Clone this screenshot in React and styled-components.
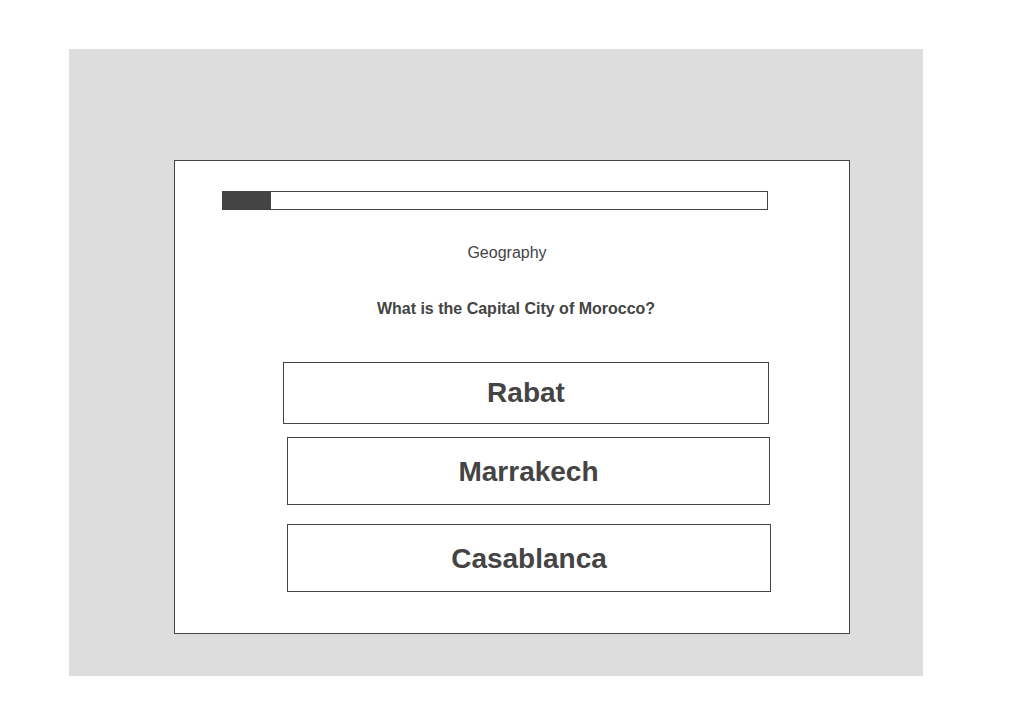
import React from "react";
import styled, { createGlobalStyle } from "styled-components";

const Global = createGlobalStyle`
  html, body { margin: 0; padding: 0; background: #fff; }
  body { font-family: "Liberation Sans", Arial, sans-serif; color: #444; }
  * { box-sizing: border-box; }
`;

const Stage = styled.div`
  margin: 49px 0 0 69px;
  width: 854px;
  height: 627px;
  background: #dddddd;
  padding: 111px 0 0 105px;
`;

const Card = styled.div`
  width: 676px;
  height: 474px;
  background: #fff;
  border: 1px solid #444;
  padding: 30px 0 41px 0;
  display: flex;
  flex-direction: column;
`;

const Progress = styled.div`
  margin-left: 47px;
  width: 546px;
  height: 19px;
  border: 1px solid #444;
  display: flex;
`;

const Fill = styled.div`
  background: #444;
  margin: -1px 0 0 -1px;
  height: calc(100% + 2px);
`;

const Category = styled.div`
  margin-top: 34px;
  height: 18px;
  line-height: 18px;
  font-size: 16px;
  text-align: center;
  padding-right: ${(p) => p.$pr || 0}px;
  padding-left: ${(p) => p.$pl || 0}px;
`;

const Question = styled(Category)`
  margin-top: 38px;
  font-weight: 700;
`;

const Options = styled.div`
  display: flex;
  flex-direction: column;
  margin-top: 44px;
`;

const Option = styled.button`
  margin: ${(p) => p.$mt}px 0 0 ${(p) => p.$ml}px;
  width: ${(p) => p.$w}px;
  height: ${(p) => p.$h}px;
  border: 1px solid #444;
  background: #fff;
  font-family: "Liberation Sans", Arial, sans-serif;
  font-size: 28px;
  font-weight: 700;
  color: #444;
  display: flex;
  align-items: center;
  justify-content: center;
  padding: ${(p) => p.$pt}px 0 0 0;
  cursor: pointer;
`;

const options = [
  { label: "Rabat", mt: 0, ml: 108, w: 486, h: 62, pt: 0 },
  { label: "Marrakech", mt: 13, ml: 112, w: 483, h: 68, pt: 2 },
  { label: "Casablanca", mt: 19, ml: 112, w: 484, h: 68, pt: 2 },
];

export default function App() {
  const progress = 49;
  return (
    <>
      <Global />
      <Stage>
        <Card>
          <Progress>
            <Fill style={{ width: progress }} />
          </Progress>
          <Category $pr={10}>Geography</Category>
          <Question $pl={8}>What is the Capital City of Morocco?</Question>
          <Options>
            {options.map((o) => (
              <Option key={o.label} $mt={o.mt} $ml={o.ml} $w={o.w} $h={o.h} $pt={o.pt}>
                {o.label}
              </Option>
            ))}
          </Options>
        </Card>
      </Stage>
    </>
  );
}
